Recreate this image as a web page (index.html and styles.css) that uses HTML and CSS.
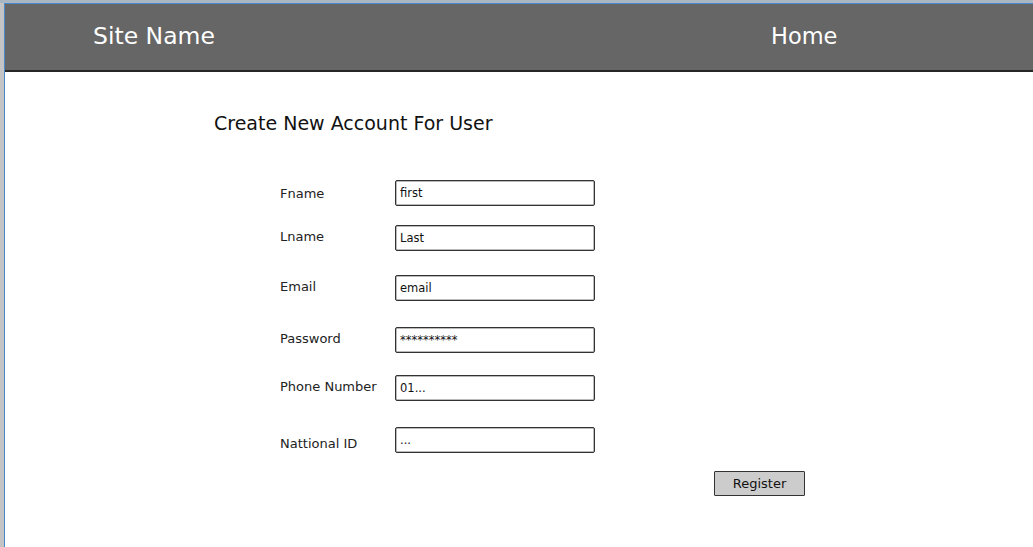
FILE: index.html
```html
<!DOCTYPE html>
<html>
<head>
<meta charset="utf-8">
<title>Create New Account</title>
<link rel="stylesheet" href="styles.css">
</head>
<body>
<div class="window">
  <header class="topbar">
    <div class="brand">Site Name</div>
    <nav class="nav"><a class="nav-link" href="#">Home</a></nav>
  </header>
  <main class="content">
    <h1 class="title">Create New Account For User</h1>
    <form class="form">
      <div class="row row-fname">
        <label class="label">Fname</label>
        <div class="field">first</div>
      </div>
      <div class="row row-lname">
        <label class="label up">Lname</label>
        <div class="field">Last</div>
      </div>
      <div class="row row-email">
        <label class="label up">Email</label>
        <div class="field">email</div>
      </div>
      <div class="row row-pass">
        <label class="label up">Password</label>
        <div class="field">**********</div>
      </div>
      <div class="row row-phone">
        <label class="label up">Phone Number</label>
        <div class="field">01...</div>
      </div>
      <div class="row row-nid">
        <label class="label down">Nattional ID</label>
        <div class="field">...</div>
      </div>
      <div class="actions">
        <button type="button" class="btn">Register</button>
      </div>
    </form>
  </main>
</div>
</body>
</html>
```
FILE: styles.css
```css
html, body {
  margin: 0;
  padding: 0;
  height: 100%;
}
body {
  background: #c4c4c4;
  font-family: "Comic Sans MS", "DejaVu Sans", sans-serif;
  color: #222;
  border-top: 3px solid #a9b6c4;
  box-sizing: border-box;
  overflow: hidden;
}
.window {
  margin-left: 4px;
  height: 100%;
  background: #fff;
  border-top: 1px solid #4a88cc;
  border-left: 1px solid #4a88cc;
  display: flex;
  flex-direction: column;
}
.topbar {
  height: 66px;
  background: #666666;
  border-bottom: 2px solid #262626;
  display: flex;
  align-items: center;
  padding-left: 88px;
}
.brand {
  color: #fff;
  font-size: 23.5px;
  width: 678px;
  padding-bottom: 2px;
}
.nav-link {
  color: #fff;
  text-decoration: none;
  font-size: 22.5px;
  padding-bottom: 2px;
  display: block;
}
.content {
  padding-left: 209px;
  padding-top: 40px;
}
.title {
  margin: 0 0 46px 0;
  font-weight: normal;
  font-size: 19px;
  color: #111;
}
.form {
  padding-left: 66px;
  width: 525px;
}
.row {
  display: flex;
  align-items: center;
}
.row-lname { margin-top: 19px; }
.row-email { margin-top: 24px; }
.row-pass { margin-top: 26px; }
.row-phone { margin-top: 22px; }
.row-nid { margin-top: 26px; }
.label {
  width: 115px;
  font-size: 13px;
  color: #222;
}
.label.up { position: relative; top: -2px; }
.label.down { position: relative; top: 3px; }
.field {
  width: 194px;
  height: 24px;
  border: 1px solid #333;
  border-radius: 2px;
  box-shadow: inset 0 0 0 0.5px #777;
  font-size: 11.5px;
  line-height: 24px;
  padding-left: 4px;
  box-sizing: content-box;
  color: #111;
}
.actions {
  display: flex;
  justify-content: flex-end;
  margin-top: 18px;
}
.btn {
  width: 91px;
  height: 25px;
  background: #cccccc;
  border: 1px solid #333;
  border-radius: 1px;
  font-family: inherit;
  font-size: 13px;
  color: #111;
  padding: 0;
}
```
